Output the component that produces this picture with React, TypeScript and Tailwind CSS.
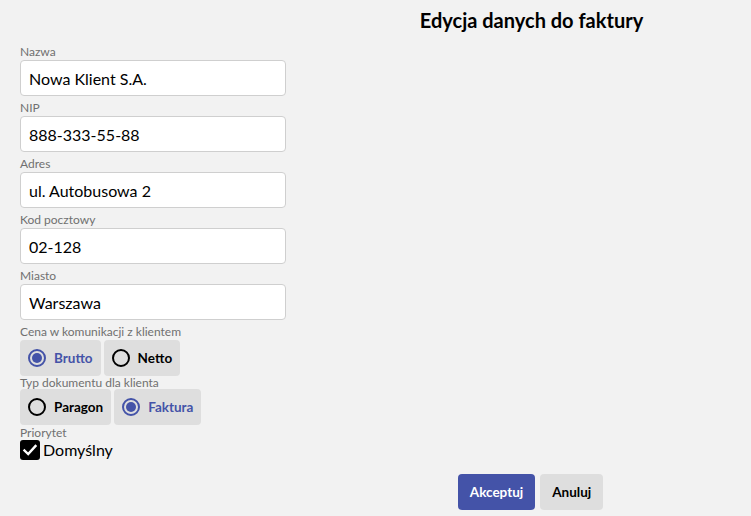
import { useState } from "react"

function Field({ label, value }: { label: string; value: string }) {
  return (
    <div className="flex flex-col">
      <label className="text-[12px] leading-[20px] h-[20px] pt-[2px] text-[#707070]">{label}</label>
      <input
        defaultValue={value}
        className="w-[266px] h-[36px] bg-white border border-[#cfcfcf] rounded-[4px] px-[8px] text-[16px] text-black outline-none"
      />
    </div>
  )
}

function Radio({ label, checked, onClick }: { label: string; checked: boolean; onClick: () => void }) {
  return (
    <button
      onClick={onClick}
      className="h-[36px] bg-[#dedede] rounded-[4px] pl-[8px] pr-[8px] flex items-center gap-[8px]"
    >
      <span
        className={`w-[18px] h-[18px] rounded-full border-2 flex items-center justify-center ${checked ? "border-[#4453a8]" : "border-black"}`}
      >
        {checked && <span className="w-[10px] h-[10px] rounded-full bg-[#4453a8]" />}
      </span>
      <span className={`text-[13.5px] font-bold ${checked ? "text-[#4453a8]" : "text-black"}`}>{label}</span>
    </button>
  )
}

export default function App() {
  const [price, setPrice] = useState("brutto")
  const [doc, setDoc] = useState("faktura")
  const [def, setDef] = useState(true)

  return (
    <div className="min-h-[516px] w-full bg-[#f2f2f2] text-black font-['Lato','Liberation_Sans',sans-serif] relative">
      <div className="flex pt-[7px]">
        <div className="w-[312px]" />
        <h1 className="flex-1 text-center text-[20px] font-bold leading-[26px]">Edycja danych do faktury</h1>
      </div>

      <div className="flex flex-col px-[20px] mt-[7px]">
        <Field label="Nazwa" value="Nowa Klient S.A." />
        <Field label="NIP" value="888-333-55-88" />
        <Field label="Adres" value="ul. Autobusowa 2" />
        <Field label="Kod pocztowy" value="02-128" />
        <Field label="Miasto" value="Warszawa" />

        <label className="text-[12px] leading-[16px] mt-[4px] h-[16px] text-[#707070]">Cena w komunikacji z klientem</label>
        <div className="flex gap-[3px]">
          <Radio label="Brutto" checked={price === "brutto"} onClick={() => setPrice("brutto")} />
          <Radio label="Netto" checked={price === "netto"} onClick={() => setPrice("netto")} />
        </div>

        <label className="text-[12px] leading-[13px] h-[13px] text-[#707070]">Typ dokumentu dla klienta</label>
        <div className="flex gap-[3px]">
          <Radio label="Paragon" checked={doc === "paragon"} onClick={() => setDoc("paragon")} />
          <Radio label="Faktura" checked={doc === "faktura"} onClick={() => setDoc("faktura")} />
        </div>

        <label className="text-[12px] leading-[15px] h-[15px] text-[#707070]">Priorytet</label>
        <button onClick={() => setDef(!def)} className="flex items-center gap-[3px] h-[20px]">
          <span className={`w-[20px] h-[20px] rounded-[3px] flex items-center justify-center ${def ? "bg-black" : "bg-white border-2 border-black"}`}>
            {def && (
              <svg width="16" height="16" viewBox="0 0 16 16" fill="none">
                <path d="M2.5 8.5 L6.2 12 L13.5 4" stroke="white" strokeWidth="2.4" strokeLinecap="square" />
              </svg>
            )}
          </span>
          <span className="text-[16px]">Domyślny</span>
        </button>
      </div>

      <div className="flex mt-[14px]">
        <div className="w-[310px]" />
        <div className="flex-1 flex justify-center gap-[5px]">
          <button className="h-[36px] px-[12px] rounded-[4px] bg-[#4453a8] text-white text-[13.5px] font-bold">Akceptuj</button>
          <button className="h-[36px] px-[12px] rounded-[4px] bg-[#dedede] text-black text-[13.5px] font-bold">Anuluj</button>
        </div>
      </div>
    </div>
  )
}
